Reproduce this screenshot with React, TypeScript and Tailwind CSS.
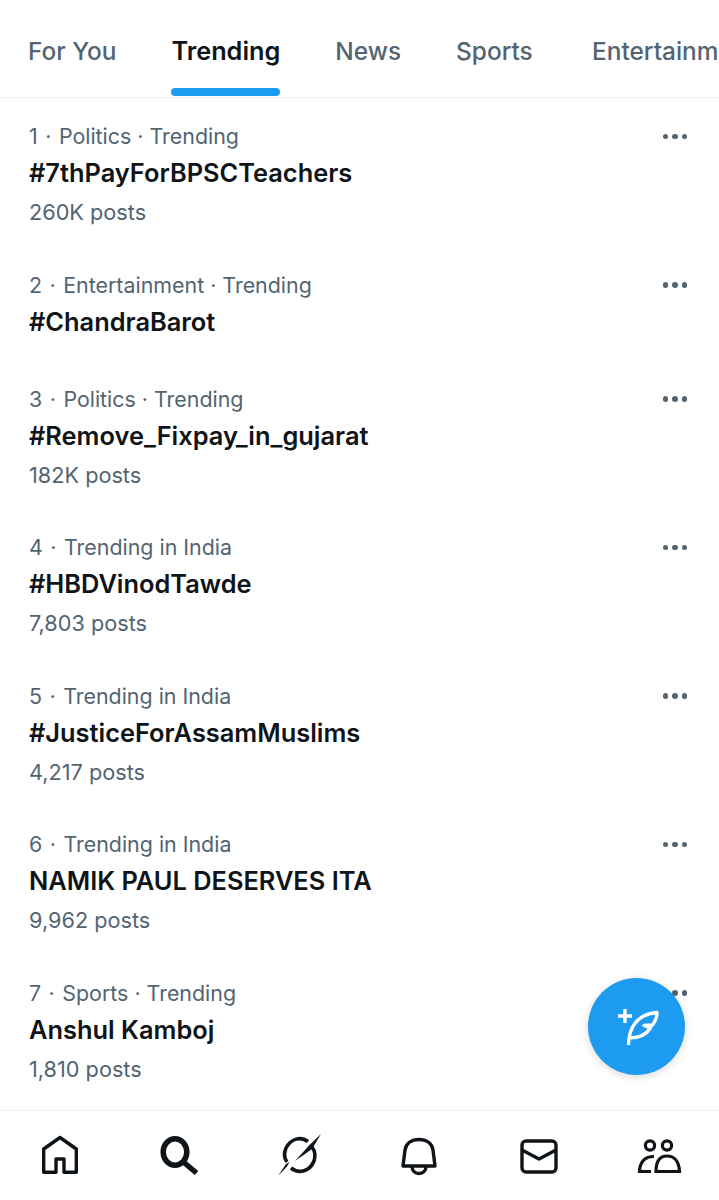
import React from "react";

// ─── Data ─────────────────────────────────────────────────────────────────────

const tabs = ["For You", "Trending", "News", "Sports", "Entertainment"];

type Trend = { rank: number; meta: string; title: string; posts?: string };

const trends: Trend[] = [
  { rank: 1, meta: "Politics · Trending", title: "#7thPayForBPSCTeachers", posts: "260K posts" },
  { rank: 2, meta: "Entertainment · Trending", title: "#ChandraBarot" },
  { rank: 3, meta: "Politics · Trending", title: "#Remove_Fixpay_in_gujarat", posts: "182K posts" },
  { rank: 4, meta: "Trending in India", title: "#HBDVinodTawde", posts: "7,803 posts" },
  { rank: 5, meta: "Trending in India", title: "#JusticeForAssamMuslims", posts: "4,217 posts" },
  { rank: 6, meta: "Trending in India", title: "NAMIK PAUL DESERVES ITA", posts: "9,962 posts" },
  { rank: 7, meta: "Sports · Trending", title: "Anshul Kamboj", posts: "1,810 posts" },
];

// ─── Icons ────────────────────────────────────────────────────────────────────

const HomeIcon = () => (
  <svg width="42" height="42" viewBox="0 0 42 42" fill="none" stroke="#0f1419" strokeWidth="3.4" strokeLinejoin="round">
    <path d="M21 3.5 L37.3 15 V38.3 H25 V25 H17 V38.3 H4.7 V15 Z" />
  </svg>
);

const SearchIcon = () => (
  <svg width="42" height="42" viewBox="0 0 42 42" fill="none" stroke="#0f1419" strokeWidth="5.5">
    <ellipse cx="16" cy="18" rx="11.8" ry="13.2" />
    <path d="M25 28.5 L37.5 39" />
  </svg>
);

const GrokIcon = () => (
  <svg width="44" height="44" viewBox="0 0 44 44" fill="none">
    <path d="M30 8.5 C23 3 13 5.5 8 15 C5.5 21 6 25 9 29" stroke="#0f1419" strokeWidth="3.6" />
    <path d="M13 35 C21 41.5 32 38 36 28 C38 22 37 18 34 14" stroke="#0f1419" strokeWidth="3.6" />
    <path d="M43 1 L31.5 12 L17 28 L34 16 Z" fill="#0f1419" />
    <path d="M0 43 L8 31 L11.5 29 L9 33.5 Z" fill="#0f1419" />
  </svg>
);

const BellIcon = () => (
  <svg width="42" height="42" viewBox="0 0 42 42" fill="none" stroke="#0f1419" strokeWidth="3.4" strokeLinejoin="round">
    <path d="M5 32 H37 L35 16 C34 9 28 5.5 21 5.5 C14 5.5 8 9 7 16 Z" />
    <path d="M14 32 C14 37 17 39.5 21 39.5 C25 39.5 28 37 28 32" />
  </svg>
);

const MailIcon = () => (
  <svg width="42" height="42" viewBox="0 0 42 42" fill="none" stroke="#0f1419" strokeWidth="3.4" strokeLinejoin="round">
    <rect x="4" y="7" width="34" height="31" rx="4" />
    <path d="M4 16 L21 25 L38 16" />
  </svg>
);

const PeopleIcon = () => (
  <svg width="46" height="42" viewBox="0 0 46 42" fill="none" stroke="#0f1419" strokeWidth="3.2">
    <circle cx="14" cy="11.5" r="4.6" />
    <circle cx="31" cy="11.5" r="4.6" />
    <path d="M18 22.5 C9 22.5 4 28 3.5 37.5 H15" />
    <path d="M20 37.5 C20 27 24 22 31 22 C38 22 43 27 43.5 37.5 Z" />
  </svg>
);

const QuillPlusIcon = () => (
  <svg width="48" height="48" viewBox="0 0 48 48" fill="none" stroke="#ffffff" strokeWidth="3.4" strokeLinejoin="round">
    <path d="M12 6 V20 M5 13 H19" />
    <path d="M15.5 42 C15.5 25 24 11 44 9.5 C44 15 42 19 39.5 22 L31 22.5 L37.5 25 C33 32 27 35 16 35" />
  </svg>
);

const navIcons = [HomeIcon, SearchIcon, GrokIcon, BellIcon, MailIcon, PeopleIcon];

// ─── Trend row ────────────────────────────────────────────────────────────────

const TrendRow = ({ rank, meta, title, posts }: Trend) => (
  <div className={`flex justify-between pl-[29px] pr-[32px] pt-[20px] ${posts ? "pb-[14.5px]" : "pb-[20px]"}`}>
    <div className="min-w-0">
      <p className="flex text-[21.4px] leading-[37px] text-[#536471] whitespace-nowrap">
        <span>{rank}</span>
        <span className="mx-[7.5px]">·</span>
        <span>{meta}</span>
      </p>
      <p className="text-[25.4px] leading-[36px] mb-[1px] font-semibold text-[#0f1419] whitespace-nowrap">{title}</p>
      {posts && <p className="text-[21.7px] leading-[40px] text-[#536471] whitespace-nowrap">{posts}</p>}
    </div>
    <div className="flex h-[37px] items-center gap-[4px]">
      <span className="h-[5.5px] w-[5.5px] rounded-full bg-[#536471]" />
      <span className="h-[5.5px] w-[5.5px] rounded-full bg-[#536471]" />
      <span className="h-[5.5px] w-[5.5px] rounded-full bg-[#536471]" />
    </div>
  </div>
);

// ─── Page ─────────────────────────────────────────────────────────────────────

export default function App() {
  return (
    <div className="relative flex h-[1200px] w-[719px] flex-col overflow-hidden bg-white font-['Inter',sans-serif]">
      {/* Tabs */}
      <div className="flex h-[98px] shrink-0 gap-[55px] overflow-hidden border-b border-[#eff3f4] pl-[28px]">
        {tabs.map((tab) => (
          <div key={tab} className={`relative shrink-0 pt-[31px] ${tab === "Sports" ? "w-[81px]" : ""}`}>
            <span
              className={`leading-[40px] whitespace-nowrap ${
                tab === "Trending"
                  ? "text-[25.3px] font-semibold text-[#0f1419]"
                  : "text-[24.4px] font-medium text-[#536471]"
              }`}
            >
              {tab}
            </span>
            {tab === "Trending" && (
              <div className="absolute bottom-[1px] left-0 right-0 h-[8px] rounded-full bg-[#1d9bf0]" />
            )}
          </div>
        ))}
      </div>

      {/* Trends */}
      <div className="min-h-0 flex-1 overflow-hidden">
        {trends.map((t) => (
          <TrendRow key={t.title} {...t} />
        ))}
      </div>

      {/* Compose button */}
      <div className="absolute left-[588px] top-[978px] flex h-[97px] w-[97px] items-center justify-center rounded-full bg-[#1d9bf0] shadow-[0_2px_8px_rgba(0,0,0,0.15)]">
        <QuillPlusIcon />
      </div>

      {/* Bottom nav */}
      <div className="grid h-[90px] shrink-0 grid-cols-6 items-center border-t border-[#eff3f4] pb-[2px]">
        {navIcons.map((Icon, i) => (
          <div key={i} className="flex justify-center">
            <Icon />
          </div>
        ))}
      </div>
    </div>
  );
}
